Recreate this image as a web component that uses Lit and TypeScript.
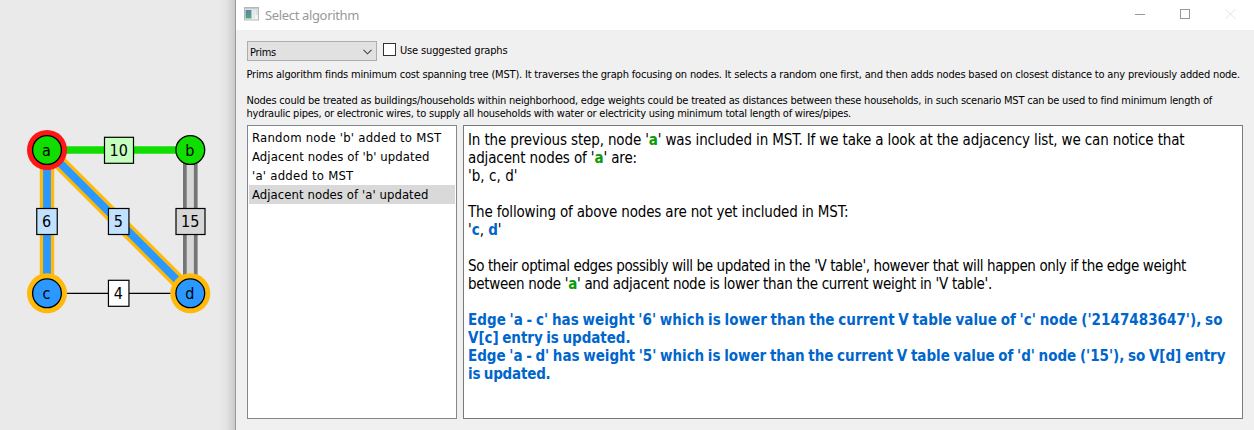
import { LitElement, html, svg, css } from "lit";
import { customElement } from "lit/decorators.js";

/** One row of text whose letter spacing is tuned so that it spans `span` pixels. */
@customElement("text-line")
class TextLine extends LitElement {
  static properties = { span: { type: Number } };
  declare span: number;

  static styles = css`
    :host { display: block; white-space: pre; }
    .run { display: inline-block; }
  `;

  firstUpdated() {
    const run = this.renderRoot.querySelector(".run") as HTMLElement;
    const count = (this.textContent ?? "").length;
    if (!this.span || !count) return;
    const spacing = (this.span - run.getBoundingClientRect().width) / count;
    this.style.letterSpacing = `${spacing.toFixed(4)}px`;
  }

  render() {
    return html`<span class="run"><slot></slot></span>`;
  }
}

const STEPS = [
  { text: "Random node 'b' added to MST", span: 189.5 },
  { text: "Adjacent nodes of 'b' updated", span: 177.5 },
  { text: "'a' added to MST", span: 101.5 },
  { text: "Adjacent nodes of 'a' updated", span: 176.5, selected: true },
];

const NODES = [
  { id: "a", x: 47, y: 150, fill: "#10dd00", ring: "#ff1717" },
  { id: "b", x: 190.3, y: 150, fill: "#10dd00", ring: "" },
  { id: "c", x: 47, y: 293.3, fill: "#2b98ff", ring: "#ffb90a" },
  { id: "d", x: 190.3, y: 293.3, fill: "#2b98ff", ring: "#ffb90a" },
];

const WEIGHTS = [
  { text: "10", x: 119, y: 150.3, w: 29, fill: "#c4ffc0" },
  { text: "6", x: 47, y: 221.5, w: 20.5, fill: "#c0e1ff" },
  { text: "5", x: 118.7, y: 221.5, w: 20.5, fill: "#c0e1ff" },
  { text: "15", x: 190.5, y: 221.5, w: 29, fill: "#d7d7d7" },
  { text: "4", x: 118.7, y: 293.3, w: 20.5, fill: "#ffffff" },
];

@customElement("app-root")
class AppRoot extends LitElement {
  static styles = css`
    :host {
      display: flex;
      width: 1254px;
      height: 430px;
      overflow: hidden;
      background: #eaeaea;
      color: #000;
      font-family: "DejaVu Sans Condensed", "DejaVu Sans", sans-serif;
      font-stretch: condensed;
      font-size: 11px;
    }
    * { box-sizing: border-box; }
    svg { display: block; }
    .canvas {
      flex: none;
      width: 235px;
      background: linear-gradient(to right, #eaeaea 219px, #e3e3e3 226px, #cbcbcb 235px);
    }
    .glyph { font-size: 16px; text-anchor: middle; }
    .dialog {
      flex: 1;
      display: flex;
      flex-direction: column;
      border-left: 1px solid #999;
      background: #f0f0f0;
    }
    .titlebar {
      flex: none;
      display: flex;
      height: 30px;
      padding: 0 18px 0 8px;
      background: #fff;
    }
    .appicon { margin-top: 7px; }
    .title {
      flex: 1;
      margin-left: 5px;
      font: 13px/31px "Noto Sans", sans-serif;
      font-stretch: normal;
      color: #999;
    }
    .controls { display: flex; gap: 35px; margin-top: 9px; }
    .body {
      flex: 1;
      display: flex;
      flex-direction: column;
      padding: 11px 11px 11px 10.5px;
    }
    .options { display: flex; height: 27px; margin-left: 0.5px; }
    .combo {
      display: flex;
      justify-content: space-between;
      width: 130px;
      height: 20px;
      padding: 0 4px 0 2px;
      border: 1px solid #adadad;
      background: #e1e1e1;
      line-height: 21px;
    }
    .combo svg { margin-top: 7px; }
    .check {
      width: 13px;
      height: 13px;
      margin: 2px 4px 0 6px;
      border: 1px solid #333;
      background: #fff;
    }
    .label { line-height: 19px; }
    .about { height: 57px; line-height: 13px; }
    .gap { height: 13px; }
    .panes { display: flex; gap: 6px; height: 294px; margin-left: 0.5px; }
    .steps {
      width: 210px;
      padding: 2px 1px;
      border: 1px solid #828790;
      background: #fff;
      font-size: 13px;
      line-height: 19px;
    }
    .step { padding-left: 3px; }
    .selected { background: #d9d9d9; }
    .explain {
      width: 780px;
      padding: 5px 4px;
      border: 1px solid #7a7a7a;
      background: #fff;
      font-size: 15px;
      line-height: 18px;
    }
    .blank { height: 18px; }
    .green { color: #0a9a0a; font-weight: bold; }
    .blue { color: #0066cc; font-weight: bold; }
    .update { word-spacing: -1px; }
  `;

  private graph() {
    return svg`
      <g fill="none">
        <path d="M47 150H190.3" stroke="#10dd00" stroke-width="7.6" />
        <path d="M190.3 150V293" stroke="#757575" stroke-width="14.6" />
        <path d="M190.3 150V293" stroke="#d7d7d7" stroke-width="7.2" />
        <path d="M47 293.3H190" stroke="#000" stroke-width="1.3" />
        <path d="M47 150V293M47 150L190.3 293.3" stroke="#ffb90a" stroke-width="14.4" />
        <path d="M47 150V293M47 150L190.3 293.3" stroke="#2b98ff" stroke-width="7.8" />
      </g>
      ${NODES.map((n) => svg`
        ${n.ring ? svg`<circle cx=${n.x} cy=${n.y} r="20" fill=${n.ring} />` : ""}
        <circle cx=${n.x} cy=${n.y} r="14.4" fill=${n.fill} stroke="#000" stroke-width="1.3" />
        <text class="glyph" x=${n.x - 0.5} y=${n.y + 6}>${n.id}</text>
      `)}
      ${WEIGHTS.map((w) => svg`
        <rect x=${w.x - w.w / 2} y=${w.y - 13} width=${w.w} height="26"
          fill=${w.fill} stroke="#000" stroke-width="1.2" />
        <text class="glyph" x=${w.x - 0.3} y=${w.y + 5.9}>${w.text}</text>
      `)}
    `;
  }

  render() {
    return html`
      <div class="canvas">
        <svg width="235" height="430" viewBox="0 0 235 430">${this.graph()}</svg>
      </div>
      <div class="dialog">
        <div class="titlebar">
          <svg class="appicon" width="16" height="14" viewBox="0 0 16 14">
            <defs>
              <linearGradient id="pane" x1="0" y1="0" x2="0.5" y2="1">
                <stop offset="0" stop-color="#5b7fb5" />
                <stop offset="1" stop-color="#55a575" />
              </linearGradient>
            </defs>
            <rect x="0.5" y="0.5" width="14" height="12.5" fill="#f2f4f5" stroke="#b4b8bd" />
            <rect x="1" y="1" width="13" height="1.5" fill="#c5cad0" />
            <rect x="1.5" y="3" width="6" height="8.5" fill="url(#pane)" />
            <rect x="8.5" y="3" width="2.5" height="8.5" fill="#e3e7ea" />
            <rect x="11.7" y="3" width="2" height="5" fill="#d3e2dc" />
          </svg>
          <text-line class="title" .span=${94}>Select algorithm</text-line>
          <div class="controls">
            <svg width="10" height="10"><path d="M0 5.5H10" stroke="#999" /></svg>
            <svg width="10" height="10"><rect x=".5" y=".5" width="9" height="9" fill="none" stroke="#999" /></svg>
            <svg width="11" height="10"><path d="M.5 0L10.5 10M10.5 0L.5 10" stroke="#e3e3e3" fill="none" /></svg>
          </div>
        </div>
        <div class="body">
          <div class="options">
            <div class="combo">
              <text-line .span=${26}>Prims</text-line>
              <svg width="9" height="6"><path d="M.5 .8L4.5 4.8L8.5 .8" fill="none" stroke="#444" stroke-width="1.1" /></svg>
            </div>
            <div class="check"></div>
            <text-line class="label" .span=${107.5}>Use suggested graphs</text-line>
          </div>
          <div class="about">
            <text-line .span=${993.5}>Prims algorithm finds minimum cost spanning tree (MST). It traverses the graph focusing on nodes. It selects a random one first, and then adds nodes based on closest distance to any previously added node.</text-line>
            <div class="gap"></div>
            <text-line .span=${965.5}>Nodes could be treated as buildings/households within neighborhood, edge weights could be treated as distances between these households, in such scenario MST can be used to find minimum length of</text-line>
            <text-line .span=${604.5}>hydraulic pipes, or electronic wires, to supply all households with water or electricity using minimum total length of wires/pipes.</text-line>
          </div>
          <div class="panes">
            <div class="steps">
              ${STEPS.map((s) => html`<text-line class="step ${s.selected ? "selected" : ""}" .span=${s.span}>${s.text}</text-line>`)}
            </div>
            <div class="explain">
              <text-line .span=${716.5}>In the previous step, node '<span class="green">a</span>' was included in MST. If we take a look at the adjacency list, we can notice that</text-line>
              <text-line .span=${169}>adjacent nodes of '<span class="green">a</span>' are:</text-line>
              <text-line .span=${49.5}>'b, c, d'</text-line>
              <div class="blank"></div>
              <text-line .span=${380.5}>The following of above nodes are not yet included in MST:</text-line>
              <text-line .span=${33.5}>'<span class="blue">c</span>, <span class="blue">d</span>'</text-line>
              <div class="blank"></div>
              <text-line .span=${718}>So their optimal edges possibly will be updated in the 'V table', however that will happen only if the edge weight</text-line>
              <text-line .span=${524}>between node '<span class="green">a</span>' and adjacent node is lower than the current weight in 'V table'.</text-line>
              <div class="blank"></div>
              <text-line class="blue update" .span=${754.5}>Edge 'a - c' has weight '6' which is lower than the current V table value of 'c' node ('2147483647'), so</text-line>
              <text-line class="blue update" .span=${162.5}>V[c] entry is updated.</text-line>
              <text-line class="blue update" .span=${757.5}>Edge 'a - d' has weight '5' which is lower than the current V table value of 'd' node ('15'), so V[d] entry</text-line>
              <text-line class="blue update" .span=${82.5}>is updated.</text-line>
            </div>
          </div>
        </div>
      </div>
    `;
  }
}
